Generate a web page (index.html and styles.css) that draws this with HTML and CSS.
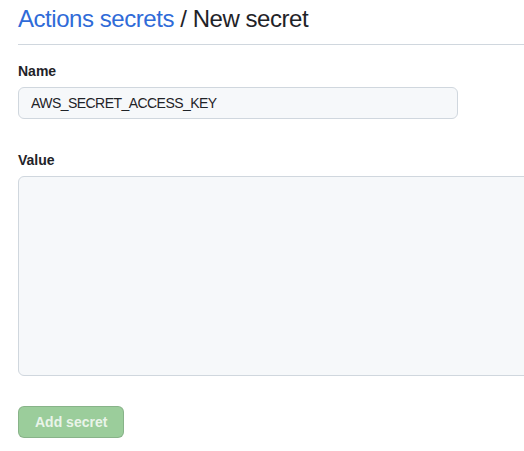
FILE: index.html
```html
<!DOCTYPE html>
<html lang="en">
<head>
<meta charset="utf-8">
<title>New secret</title>
<link rel="stylesheet" href="styles.css">
</head>
<body>
<div class="page">
  <div class="subhead">
    <h2 class="subhead-heading"><a href="#" class="crumb">Actions secrets</a> / New secret</h2>
  </div>
  <form class="form">
    <div class="form-group">
      <label class="label" for="name">Name</label>
      <input class="input" id="name" type="text" value="AWS_SECRET_ACCESS_KEY">
    </div>
    <div class="form-group value-group">
      <label class="label" for="value">Value</label>
      <textarea class="textarea" id="value"></textarea>
    </div>
    <button type="button" class="btn-primary" disabled>Add secret</button>
  </form>
</div>
</body>
</html>
```

FILE: styles.css
```css
html, body {
  margin: 0;
  padding: 0;
  background: #ffffff;
  overflow: hidden;
}

body {
  font-family: "Liberation Sans", Arial, sans-serif;
  color: #1f2328;
  font-size: 14px;
  line-height: 1.5;
}

.page {
  width: 640px;
  padding: 4px 0 0 18px;
}

.subhead {
  padding-bottom: 10px;
  border-bottom: 1px solid #d0d7de;
  margin-bottom: 16px;
}

.subhead-heading {
  margin: 0;
  font-size: 24px;
  line-height: 30px;
  font-weight: 400;
  letter-spacing: -0.45px;
  color: #1f2328;
}

.crumb {
  color: #2f6bd8;
  text-decoration: none;
}

.form {
  display: flex;
  flex-direction: column;
  align-items: flex-start;
}

.form-group {
  display: flex;
  flex-direction: column;
  align-items: flex-start;
  width: 100%;
}

.value-group {
  margin-top: 31px;
}

.label {
  display: block;
  font-weight: 700;
  font-size: 14px;
  line-height: 21px;
  margin-bottom: 5px;
  color: #1f2328;
}

.input {
  box-sizing: border-box;
  width: 440px;
  height: 32px;
  margin: 0;
  padding: 0 12px;
  font-family: "Liberation Sans", Arial, sans-serif;
  font-size: 14px;
  letter-spacing: -0.55px;
  color: #1f2328;
  background: #f6f8fa;
  border: 1px solid #d0d7de;
  border-radius: 6px;
  outline: none;
}

.textarea {
  box-sizing: border-box;
  width: 100%;
  height: 200px;
  margin: 0;
  padding: 8px 12px;
  background: #f6f8fa;
  border: 1px solid #d0d7de;
  border-radius: 6px;
  resize: none;
  outline: none;
  font-family: "Liberation Mono", monospace;
  font-size: 12px;
}

.btn-primary {
  margin-top: 30px;
  box-sizing: border-box;
  height: 32px;
  padding: 0 16px;
  font-family: "Liberation Sans", Arial, sans-serif;
  font-size: 14px;
  font-weight: 700;
  line-height: 20px;
  color: rgba(255, 255, 255, 0.8);
  background: #9bcd9b;
  border: 1px solid rgba(31, 35, 40, 0.15);
  border-radius: 6px;
  cursor: default;
}
```
